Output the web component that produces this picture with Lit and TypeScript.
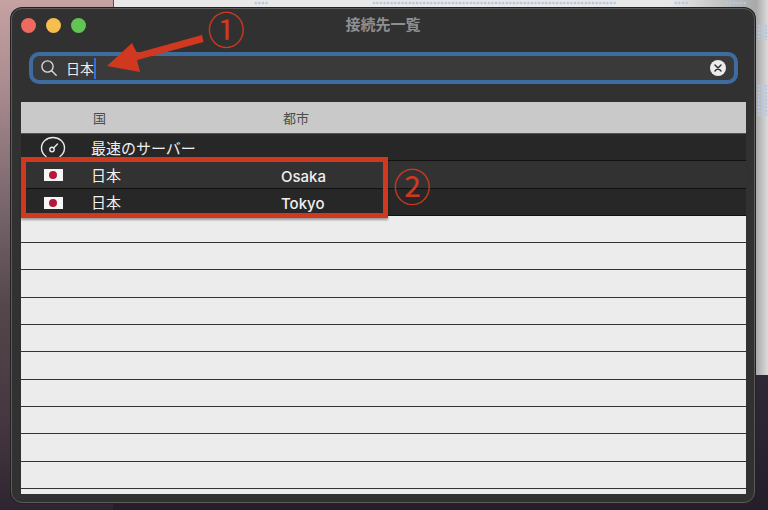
import { LitElement, html, css } from "lit";
import { customElement } from "lit/decorators.js";

const flag = html`<span class="flag"><i></i></span>`;

@customElement("app-root")
export class AppRoot extends LitElement {
  static styles = css`
    :host {
      display: block;
      position: relative;
      width: 768px;
      height: 510px;
      overflow: hidden;
      box-sizing: border-box;
      padding: 8px 13px 7px 11px;
      font-family: "Inter", "Noto Sans CJK JP", sans-serif;
      background: linear-gradient(180deg, #2b2433 0%, #3a3040 50%, #241e2a 100%);
    }
    .wall-left {
      position: absolute; left: 0; top: 0; width: 113px; height: 510px;
      background: linear-gradient(180deg, #c6a2a2 0%, #a88a8e 18%, #75636a 42%, #54474a 60%, #43353f 85%, #2d2530 100%);
    }
    .wall-right {
      position: absolute; left: 113px; right: 0; top: 0; height: 375px;
      background: linear-gradient(90deg, #e8e8e8 0%, #e8e8e8 85%, #a9a9a9 98.2%, #dcdcdc 100%);
      border-left: 1px solid #5a4b4e;
    }
    .dots {
      position: absolute;
      background-image: radial-gradient(circle, #b4c8e2 1.2px, transparent 1.5px);
      background-size: 3.6px 3.6px;
    }
    .window {
      position: relative;
      height: 100%;
      box-sizing: border-box;
      background: #323131;
      border: 1px solid #5b5b5b;
      border-radius: 11px;
      display: flex;
      flex-direction: column;
      box-shadow: 0 0 0 1px #222;
    }
    .titlebar {
      display: flex;
      align-items: center;
      height: 32px;
      flex: none;
      position: relative;
      padding: 0 0 0 9px;
      gap: 10px;
    }
    .light { width: 15px; height: 15px; border-radius: 50%; }
    .red { background: #ed6a5e; }
    .yellow { background: #f5bf4f; }
    .green { background: #61c554; }
    .title {
      position: absolute; left: 0; right: 0; top: 5px;
      text-align: center;
      font-family: "Noto Sans CJK JP", sans-serif;
      font-size: 15px;
      line-height: 20px;
      font-weight: 700;
      color: #8f8f8f;
    }
    .search {
      flex: none;
      margin: 11px 16px 0 17px;
      height: 32px;
      box-sizing: border-box;
      border: 4px solid #3e6c9e;
      border-radius: 10px;
      background: #3a3a3a;
      display: flex;
      align-items: center;
      padding: 0 8px 0 7px;
      color: #ececec;
      font-size: 14px;
    }
    .search svg.mag { flex: none; width: 18px; height: 18px; margin-right: 8px; }
    .search .value { line-height: 20px; font-family: "Noto Sans CJK JP", sans-serif; }
    .caret { width: 2px; height: 21px; background: #2f6fe0; flex: none; }
    .spacer { flex: 1; }
    .clear {
      flex: none; width: 16px; height: 16px; border-radius: 50%;
      background: #ececec; display: flex; align-items: center; justify-content: center;
    }
    .table {
      flex: 1;
      min-height: 0;
      margin: 18px 8px 8px 9px;
      background: #ececec;
      overflow: hidden;
      display: flex;
      flex-direction: column;
    }
    .head {
      flex: none;
      height: 32px;
      box-sizing: border-box;
      background: #c9c9c9;
      border-bottom: 1px solid #555;
      display: grid;
      grid-template-columns: 72px 190px 1fr;
      align-items: center;
      font-size: 13px;
      color: #4c4c4c;
      font-family: "Noto Sans CJK JP", sans-serif;
    }
    .row {
      flex: none;
      height: 27.3px;
      box-sizing: border-box;
      border-bottom: 1.5px solid #111;
      display: grid;
      grid-template-columns: 70px 190px 1fr;
      align-items: center;
      padding-top: 2px;
      font-size: 15px;
      font-weight: 500;
      color: #efefef;
      overflow: hidden;
    }
    .row.dark { background: #272727; }
    .row.mid { background: #323232; }
    .row.empty { background: #ececec; border-bottom-color: #333; }
    .cell-icon { display: flex; justify-content: center; padding-right: 6px; }
    .ja { font-family: "Noto Sans CJK JP", sans-serif; font-size: 15px; font-weight: 400; padding-bottom: 2px; }
    .latin { padding-top: 2px; }
    .flag {
      width: 19px; height: 12px; background: #f6f6f6;
      display: flex; align-items: center; justify-content: center;
    }
    .flag i { width: 8px; height: 8px; border-radius: 50%; background: #b5183a; }
    .box {
      position: absolute; left: 21px; top: 157px; width: 367px; height: 61px;
      box-sizing: border-box;
      border: 5.5px solid #d0391f;
      box-shadow: 0 2px 2px rgba(0,0,0,.35);
    }
    .arrow { position: absolute; left: 100px; top: 30px; width: 110px; height: 50px; }
    .num {
      position: absolute;
      font-family: "Noto Sans CJK JP", sans-serif;
      font-size: 37.5px;
      line-height: 50px;
      width: 40px;
      text-align: center;
      color: #d0391f;
    }
    .n1 { left: 206px; top: 2.5px; }
    .n2 { left: 392px; top: 160px; }
  `;

  render() {
    return html`
      <div class="wall-left"></div>
      <div class="wall-right"></div>
      <div class="dots" style="left:254px;top:1px;width:14px;height:4px"></div>
      <div class="dots" style="left:372px;top:1px;width:244px;height:4px"></div>
      <div class="dots" style="left:674px;top:1px;width:14px;height:4px"></div>
      <div class="dots" style="left:725px;top:1px;width:22px;height:4px"></div>
      <div class="dots" style="left:757px;top:24px;width:11px;height:16px"></div>
      <div class="dots" style="left:757px;top:84px;width:11px;height:32px"></div>

      <div class="window">
        <div class="titlebar">
          <span class="light red"></span>
          <span class="light yellow"></span>
          <span class="light green"></span>
          <div class="title">接続先一覧</div>
        </div>
        <div class="search">
          <svg class="mag" viewBox="0 0 18 18" fill="none" stroke="#d8d8d8" stroke-width="1.4">
            <circle cx="7.5" cy="7.5" r="5.6"></circle>
            <path d="M11.7 11.7L16.2 16.2" stroke-linecap="round"></path>
          </svg>
          <span class="value">日本</span>
          <span class="caret"></span>
          <span class="spacer"></span>
          <span class="clear">
            <svg width="8" height="8" viewBox="0 0 8 8" stroke="#333" stroke-width="1.5" stroke-linecap="round">
              <path d="M1 1L7 7M7 1L1 7"></path>
            </svg>
          </span>
        </div>
        <div class="table">
          <div class="head"><span></span><span>国</span><span>都市</span></div>
          <div class="row dark">
            <span class="cell-icon">
              <svg width="26" height="24" viewBox="0 0 26 24" fill="none" stroke="#e8e8e8" stroke-width="1.4" stroke-linecap="round">
                <path d="M6 20.5C3 18.3 1.5 15.2 1.5 12C1.5 5.8 6.6 1.5 13 1.5S24.5 5.8 24.5 12C24.5 15.2 23 18.3 20 20.5"></path>
                <circle cx="12" cy="13.5" r="2.2"></circle>
                <path d="M13.6 12L17.5 8"></path>
              </svg>
            </span>
            <span class="ja">最速のサーバー</span><span></span>
          </div>
          <div class="row mid">
            <span class="cell-icon">${flag}</span>
            <span class="ja">日本</span><span class="latin">Osaka</span>
          </div>
          <div class="row dark">
            <span class="cell-icon">${flag}</span>
            <span class="ja">日本</span><span class="latin">Tokyo</span>
          </div>
          ${Array.from({ length: 11 }, () => html`<div class="row empty"></div>`)}
        </div>
      </div>

      <div class="box"></div>
      <svg class="arrow" viewBox="0 0 110 50">
        <path fill="#d0391f" d="M7 36L32 13L37 23L102 5L103.5 12L37 30L40 42Z"></path>
      </svg>
      <div class="num n1">①</div>
      <div class="num n2">②</div>
    `;
  }
}
